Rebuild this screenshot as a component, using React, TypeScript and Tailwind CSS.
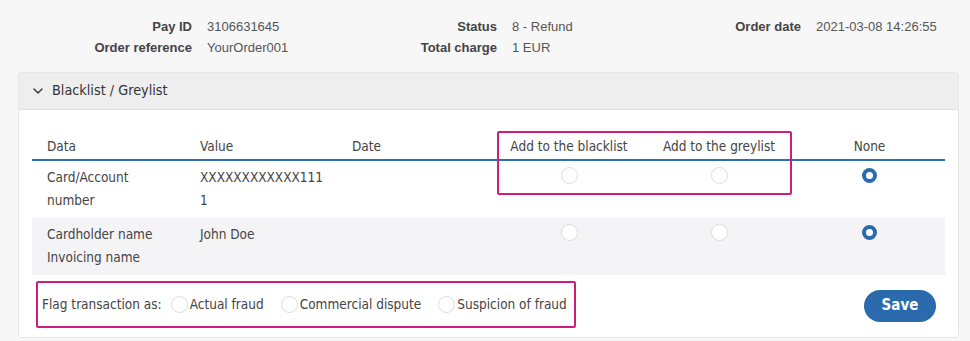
import React from 'react';
import { ChevronDown } from 'lucide-react';

const info = [
  ['Pay ID', '3106631645', 'Status', '8 - Refund', 'Order date', '2021-03-08 14:26:55'],
  ['Order reference', 'YourOrder001', 'Total charge', '1 EUR', '', ''],
];

const rows = [
  { data: ['Card/Account', 'number'], value: ['XXXXXXXXXXXX111', '1'], bg: 'bg-white' },
  { data: ['Cardholder name', 'Invoicing name'], value: ['John Doe'], bg: 'bg-[#f4f4f6]' },
];

const cols = 'grid grid-cols-[153px_152px_157px_150px_150px_1fr]';

function Radio({ checked = false }: { checked?: boolean }) {
  if (checked) {
    return <span className="block w-[15px] h-[15px] rounded-full border-[4px] border-[#2b6aad] bg-white" />;
  }
  return <span className="block shrink-0 w-[17px] h-[17px] rounded-full border border-[#dcdcdc] bg-white" />;
}

export default function App() {
  return (
    <div className="w-[970px] h-[341px] bg-[#f7f7f7] overflow-hidden">
      {/* Order info */}
      <div className="h-[72px] pt-[16px] font-['Liberation_Sans',Arial,sans-serif] text-[13px] leading-[21px]">
        {info.map((r, i) => (
          <div key={i} className="grid grid-cols-[192px_98px_177px_97px_177px_1fr] gap-x-[15px]">
            <span className="text-right font-bold text-[#444]">{r[0]}</span>
            <span className="text-[#555]">{r[1]}</span>
            <span className="text-right font-bold text-[#444]">{r[2]}</span>
            <span className="text-[#555]">{r[3]}</span>
            <span className="text-right font-bold text-[#444]">{r[4]}</span>
            <span className="text-[#555]">{r[5]}</span>
          </div>
        ))}
      </div>

      {/* Panel */}
      <div className="ml-[18px] w-[941px] h-[266px] bg-white border border-[#e6e6e6] rounded-[3px] font-['DejaVu_Sans_Condensed','Noto_Sans',sans-serif] text-[13.5px] text-[#444]">
        <div className="h-[37px] bg-[#eeeeee] border-b border-[#e0e0e0] flex items-center pl-[11px] gap-[6px] text-[#333]">
          <ChevronDown className="w-[16px] h-[16px]" strokeWidth={2} />
          <span className="text-[14.3px]">Blacklist / Greylist</span>
        </div>

        <div className="relative pl-[13px] pr-[13px] pt-[26px]">
          <div className={`${cols} h-[25px] border-b-2 border-[#2c6eaf] items-start`}>
            <span className="pl-[15px]">Data</span>
            <span className="pl-[15px]">Value</span>
            <span className="pl-[15px]">Date</span>
            <span className="text-center">Add to the blacklist</span>
            <span className="text-center">Add to the greylist</span>
            <span className="text-center">None</span>
          </div>
          {rows.map((r, i) => (
            <div key={i} className={`${cols} ${r.bg} h-[57px] pt-[5px] leading-[23px]`}>
              <div className="pl-[15px]">
                {r.data.map((t) => <div key={t}>{t}</div>)}
              </div>
              <div className="pl-[15px]">
                {r.value.map((t) => <div key={t}>{t}</div>)}
              </div>
              <div />
              <div className="flex justify-center pt-[1px]"><Radio /></div>
              <div className="flex justify-center pt-[1px]"><Radio /></div>
              <div className="flex justify-center pt-[2px]"><Radio checked /></div>
            </div>
          ))}
          {/* highlight */}
          <div className="absolute left-[478px] top-[21px] w-[295px] h-[64px] border-2 border-[#d01c7b] rounded-[2px]" />
        </div>

        <div className="flex items-center justify-between pl-[17px] pr-[22px] pt-[6px]">
          <div className="h-[47px] border-2 border-[#d01c7b] rounded-[2px] flex items-center pl-[4px] pr-[7px]">
            <span className="mr-[9px]">Flag transaction as:</span>
            <label className="flex items-center gap-[2px] mr-[17px]"><Radio />Actual fraud</label>
            <label className="flex items-center gap-[2px] mr-[17px]"><Radio />Commercial dispute</label>
            <label className="flex items-center gap-[2px]"><Radio />Suspicion of fraud</label>
          </div>
          <button className="w-[72px] h-[32px] rounded-full bg-[#2b6aad] text-white font-bold text-[15px] mt-[2px]">
            Save
          </button>
        </div>
      </div>
    </div>
  );
}
